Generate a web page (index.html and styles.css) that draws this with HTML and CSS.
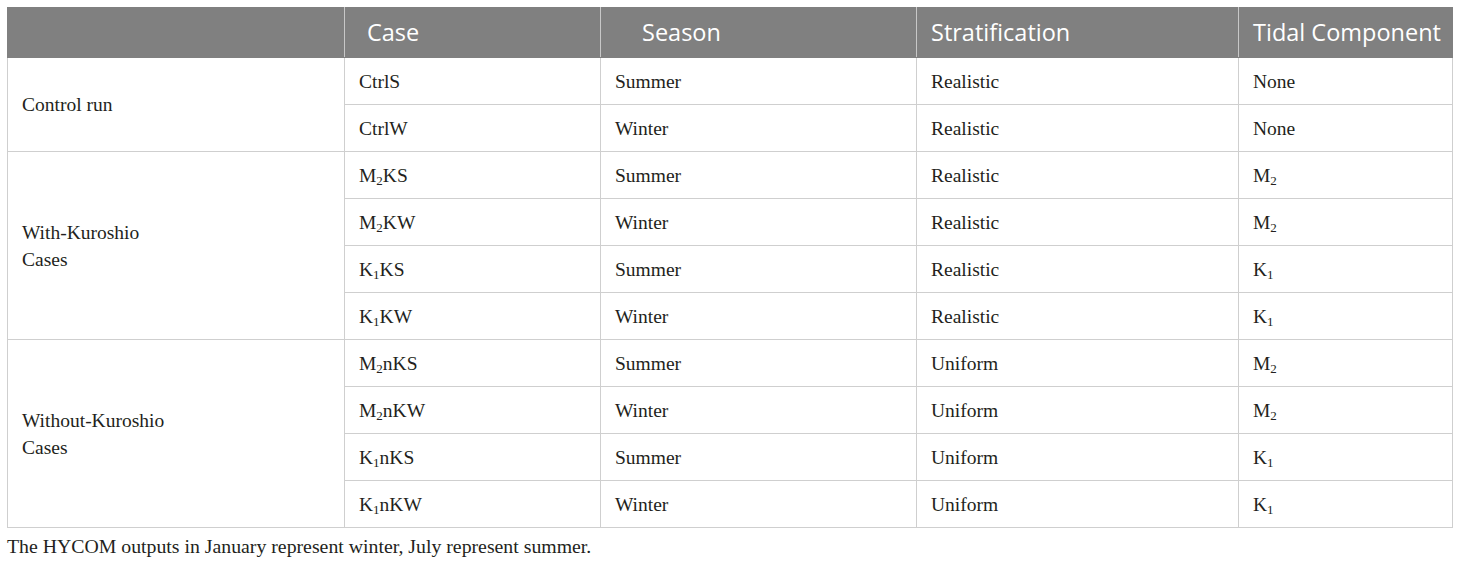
FILE: index.html
```html
<!DOCTYPE html>
<html>
<head>
<meta charset="utf-8">
<link rel="stylesheet" href="styles.css">
</head>
<body>
<div class="wrap">
<table class="tbl">
<colgroup>
<col class="c1"><col class="c2"><col class="c3"><col class="c4"><col class="c5">
</colgroup>
<thead>
<tr>
<th></th>
<th class="h-case">Case</th>
<th class="h-season">Season</th>
<th>Stratification</th>
<th>Tidal Component</th>
</tr>
</thead>
<tbody>
<tr><td rowspan="2" class="grp">Control run</td><td>CtrlS</td><td>Summer</td><td>Realistic</td><td>None</td></tr>
<tr><td>CtrlW</td><td>Winter</td><td>Realistic</td><td>None</td></tr>
<tr><td rowspan="4" class="grp">With-Kuroshio<br>Cases</td><td>M<sub>2</sub>KS</td><td>Summer</td><td>Realistic</td><td>M<sub>2</sub></td></tr>
<tr><td>M<sub>2</sub>KW</td><td>Winter</td><td>Realistic</td><td>M<sub>2</sub></td></tr>
<tr><td>K<sub>1</sub>KS</td><td>Summer</td><td>Realistic</td><td>K<sub>1</sub></td></tr>
<tr><td>K<sub>1</sub>KW</td><td>Winter</td><td>Realistic</td><td>K<sub>1</sub></td></tr>
<tr><td rowspan="4" class="grp">Without-Kuroshio<br>Cases</td><td>M<sub>2</sub>nKS</td><td>Summer</td><td>Uniform</td><td>M<sub>2</sub></td></tr>
<tr><td>M<sub>2</sub>nKW</td><td>Winter</td><td>Uniform</td><td>M<sub>2</sub></td></tr>
<tr><td>K<sub>1</sub>nKS</td><td>Summer</td><td>Uniform</td><td>K<sub>1</sub></td></tr>
<tr><td>K<sub>1</sub>nKW</td><td>Winter</td><td>Uniform</td><td>K<sub>1</sub></td></tr>
</tbody>
</table>
<p class="note">The HYCOM outputs in January represent winter, July represent summer.</p>
</div>
</body>
</html>
```
FILE: styles.css
```css
html, body {
  margin: 0;
  padding: 0;
  background: #ffffff;
}
.wrap {
  padding: 7px 0 0 7px;
}
.tbl {
  border-collapse: collapse;
  table-layout: fixed;
  width: 1445px;
  font-family: "Liberation Serif", "Times New Roman", serif;
  font-size: 19.5px;
  color: #231f20;
}
.c1 { width: 337px; }
.c2 { width: 256px; }
.c3 { width: 316px; }
.c4 { width: 322px; }
.c5 { width: 214px; }
.tbl th {
  background: #808080;
  color: #ffffff;
  font-family: "Open Sans", "Liberation Sans", sans-serif;
  font-weight: normal;
  font-size: 23.5px;
  line-height: 30px;
  text-align: left;
  height: 47px;
  padding: 0 0 2px 14px;
  border: 1px solid #c8c8c8;
  border-top-color: #808080;
  border-bottom-color: #808080;
}
.tbl th:first-child { border-left-color: #808080; }
.tbl th:last-child { border-right-color: #808080; }
.tbl th.h-case { padding-left: 22px; }
.tbl th.h-season { padding-left: 41px; }
.tbl td {
  height: 46px;
  padding: 0 0 0 14px;
  border: 1px solid #cfcfcf;
  vertical-align: middle;
  line-height: 27px;
}
.tbl td.grp {
  padding-left: 14px;
}
.tbl sub {
  font-size: 13px;
  vertical-align: -3px;
  line-height: 0;
}
.note {
  margin: 6px 0 0 0;
  font-family: "Liberation Serif", "Times New Roman", serif;
  font-size: 19.8px;
  line-height: 24px;
  color: #231f20;
}
```
